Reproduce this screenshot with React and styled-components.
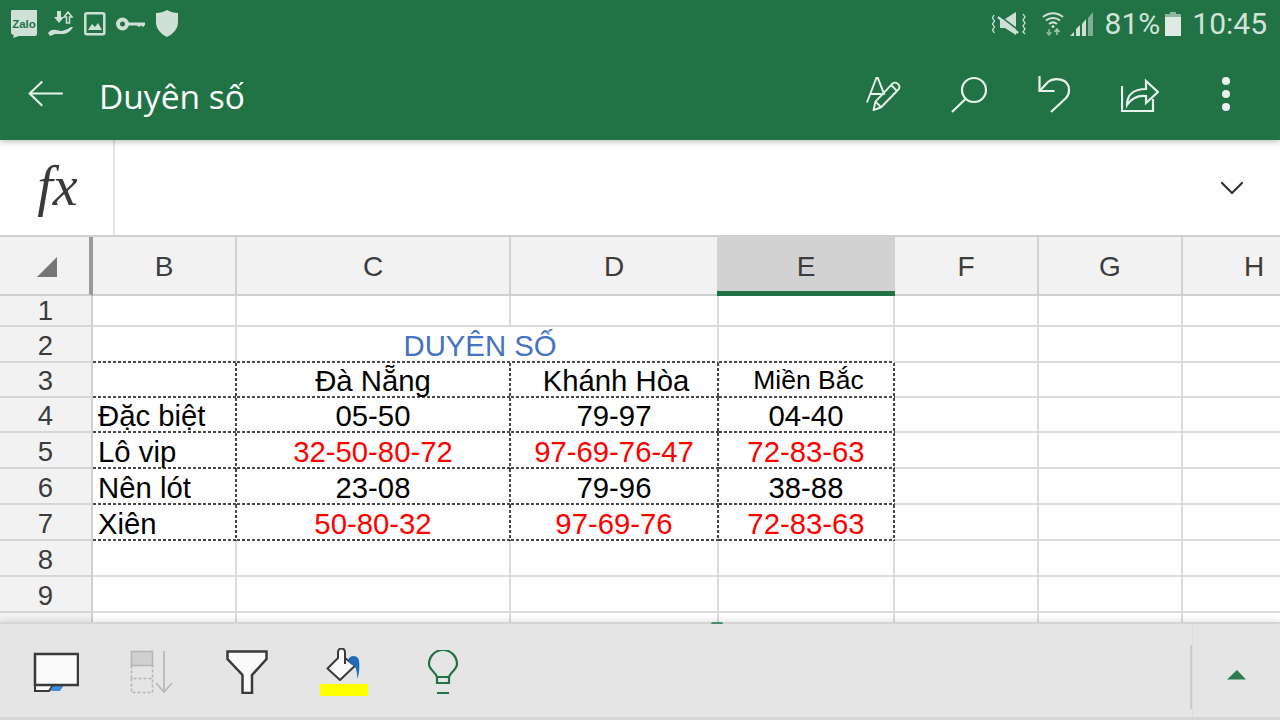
import styled, { createGlobalStyle } from 'styled-components';
import { ChevronDown } from 'lucide-react';

const GlobalStyle = createGlobalStyle`
  html, body { margin: 0; padding: 0; background: #fff; }
  body { font-family: "Liberation Sans", Arial, sans-serif; }
`;

const Screen = styled.div`
  width: 1280px;
  height: 720px;
  display: flex;
  flex-direction: column;
  overflow: hidden;
`;

const Header = styled.header`
  height: 140px;
  flex: none;
  background: #217346;
  color: #fff;
  position: relative;
  z-index: 2;
  box-shadow: 0 2px 6px rgba(0, 0, 0, 0.25);
`;

const StatusBar = styled.div`
  height: 50px;
  display: flex;
  align-items: center;
  justify-content: space-between;
  padding: 0 13px 3px 10px;
  box-sizing: border-box;
`;

const StatusGroup = styled.div`
  display: flex;
  align-items: center;
  gap: ${(p) => p.$gap || 6}px;
`;

const StatusText = styled.span`
  font-family: Roboto, sans-serif;
  font-size: ${(p) => p.$size || 30}px;
  color: #d3e3da;
  line-height: 1;
  margin-left: ${(p) => p.$left || 0}px;
`;

const AppBar = styled.div`
  height: 90px;
  display: flex;
  align-items: center;
  padding: 0 0 0 28px;
  margin-top: -1px;
`;

const Title = styled.h1`
  margin: 0 0 0 35px;
  padding-top: 4px;
  font: 400 33.500px "Open Sans", sans-serif;
  color: #fff;
  flex: 1;
`;

const Actions = styled.div`
  display: flex;
  align-items: center;
  gap: 50px;
  padding-right: 49px;
`;

const FormulaBar = styled.div`
  height: 95px;
  flex: none;
  display: flex;
  background: #fff;
`;

const FxBox = styled.div`
  width: 115px;
  box-sizing: border-box;
  border-right: 2px solid #e4e4e4;
  display: flex;
  align-items: center;
  justify-content: center;
  font: italic 56px "Liberation Serif", serif;
  color: #3a3a3a;
  padding: 0 0 4px 2px;
`;

const FormulaInput = styled.div`
  flex: 1;
  display: flex;
  align-items: center;
  justify-content: flex-end;
  padding-right: 28px;
  color: #333;
`;

const Sheet = styled.div`
  flex: 1;
  min-height: 0;
  overflow: hidden;
  border-top: 2px solid #d0d0d0;
  display: grid;
  grid-template-columns: 93px 144px 274px 208px 176px 144px 144px 144px;
  grid-auto-rows: max-content;
`;

const HeadCell = styled.div`
  height: 59px;
  box-sizing: border-box;
  padding-top: ${(p) => (p.$selected ? 5 : 2)}px;
  background: ${(p) => (p.$selected ? '#d2d2d2' : '#f2f2f2')};
  border-bottom: ${(p) => (p.$selected ? '5px solid #217346' : '2px solid #d0d0d0')};
  margin-left: ${(p) => (p.$selected ? '-2px' : '0')};
  border-right: ${(p) => (p.$selected ? '0' : '2px solid #d0d0d0')};
  display: flex;
  align-items: center;
  justify-content: center;
  font-size: 28px;
  color: #3c3c3c;
  position: relative;
  z-index: ${(p) => (p.$selected ? 1 : 0)};
`;

const Corner = styled(HeadCell)`
  border-right: 4px solid #999;
  padding-left: 5px;
`;

const RowHead = styled.div`
  height: ${(p) => p.$h + 2}px;
  box-sizing: border-box;
  padding-top: ${(p) => (p.$h < 30 ? 1 : 3)}px;
  background: #f2f2f2;
  border-bottom: 2px solid #d6d6d6;
  border-right: 2px solid #d0d0d0;
  display: flex;
  align-items: center;
  justify-content: center;
  font-size: 27.500px;
  color: #3c3c3c;
`;

const dashRow = 'repeating-linear-gradient(90deg, #4a4a4a 0 3px, transparent 3px 5px)';
const dashColumn = 'repeating-linear-gradient(180deg, #4a4a4a 0 3px, transparent 3px 5px)';

const Cell = styled.div`
  height: ${(p) => p.$h + 2}px;
  box-sizing: border-box;
  grid-column: span ${(p) => p.$span || 1};
  border-right: 2px solid ${(p) => (p.$boxed ? 'transparent' : '#dcdcdc')};
  border-bottom: 2px solid ${(p) => (p.$boxed || p.$under ? 'transparent' : '#dcdcdc')};
  background-origin: border-box;
  background-repeat: no-repeat;
  background-image: ${(p) => (p.$boxed ? `${dashRow}, ${dashColumn}` : p.$under ? dashRow : 'none')};
  background-position: ${(p) => (p.$boxed ? 'left bottom, right top' : 'left bottom')};
  background-size: ${(p) => (p.$boxed ? '100% 2px, 2px 100%' : '100% 2px')};
  display: flex;
  align-items: center;
  justify-content: ${(p) => (p.$left ? 'flex-start' : 'center')};
  padding-top: ${(p) => (p.$h < 34 ? 2 : 4)}px;
  padding-left: ${(p) => (p.$left ? 5 : p.$shift || 0)}px;
  font-size: ${(p) => p.$size || 29.300}px;
  color: ${(p) => p.$color || '#000'};
  white-space: nowrap;
`;

const Toolbar = styled.footer`
  height: 98px;
  flex: none;
  box-sizing: border-box;
  background: #e5e5e5;
  border-top: 2px solid #d4d4d4;
  border-bottom: 3px solid #d6d6d6;
  display: flex;
  align-items: center;
  position: relative;
  z-index: 2;
  box-shadow: 0 -3px 5px rgba(0, 0, 0, 0.08);
  &::before {
    content: '';
    position: absolute;
    left: 711px;
    top: -2px;
    width: 12px;
    height: 2px;
    border-radius: 2px 2px 0 0;
    background: #4a8a68;
  }
`;

const Tools = styled.div`
  flex: 1;
  display: flex;
  align-items: center;
  gap: 51px;
  padding: 3px 0 0 33px;
`;

const ExpandArea = styled.div`
  width: 88px;
  align-self: stretch;
  box-sizing: border-box;
  padding-top: 9px;
  border-left: 1px solid #dcdcdc;
  display: flex;
  align-items: center;
  justify-content: center;
  position: relative;
  &::before {
    content: '';
    position: absolute;
    left: -3px;
    top: 21px;
    height: 64px;
    width: 2px;
    background: #cbcbcb;
  }
`;

const ZaloIcon = () => (
  <svg width="28" height="28" viewBox="0 0 28 28">
    <path d="M1 3a3 3 0 0 1 3-3h23v25a2 2 0 0 1-2 2H9l-6 2 1-3a3 3 0 0 1-3-3z" fill="#cfe0d6" transform="translate(0 -1)" />
    <text x="14" y="17.500" fontFamily="Liberation Sans" fontWeight="700" fontSize="11.500" textAnchor="middle" fill="#217346">Zalo</text>
  </svg>
);

const TransferIcon = () => (
  <svg width="26" height="26" viewBox="0 0 26 26" fill="#cfe0d6">
    <path d="M9 0h4v6h3l-5 6-5-6h3z" />
    <path d="M20 1l4 5h-2.500v6h-3V6H16z" fill="none" stroke="#cfe0d6" strokeWidth="1.500" />
    <path d="M0 22c2-3 5-4 8-3l5 1c2 0 7-2 10-4l2 0c-2 4-6 7-10 7H7l-5 2z" />
  </svg>
);

const PhotoIcon = () => (
  <svg width="22" height="24" viewBox="0 0 22 24">
    <rect x="1.300" y="1.300" width="19" height="21" rx="1.500" fill="none" stroke="#cfe0d6" strokeWidth="2.500" />
    <path d="M4 18l4-6 3 3 3-4 4 7z" fill="#cfe0d6" />
  </svg>
);

const KeyIcon = () => (
  <svg width="29" height="14" viewBox="0 0 29 14">
    <circle cx="6.500" cy="7" r="4.500" fill="none" stroke="#cfe0d6" strokeWidth="4" />
    <path d="M12 5.500h17V8l-2 2-2-1.500-2 1.500-2-1.500H12z" fill="#cfe0d6" />
  </svg>
);

const ShieldIcon = () => (
  <svg width="24" height="27" viewBox="0 0 24 27">
    <path d="M12 0c3 2 7 3 11 3v9c0 7-5 12-11 15C6 24 1 19 1 12V3c4 0 8-1 11-3z" fill="#cfe0d6" />
  </svg>
);

const MuteIcon = () => (
  <svg width="45" height="24" viewBox="0 0 45 24" fill="none">
    <path d="M2 3l-1.500 3 2 3-2 3 2 3-2 3 2 3" stroke="#cfe0d6" strokeWidth="1.300" />
    <path d="M31 2l2 3-2 3 2 3-2 3 2 3-2 3 2 2" stroke="#cfe0d6" strokeWidth="1.300" />
    <path d="M8 7h5l11-7v23l-11-7H8z" fill="#cfe0d6" />
    <path d="M6 5l20 16" stroke="#cfe0d6" strokeWidth="2.500" />
    <path d="M6 2.500l21 16" stroke="#217346" strokeWidth="1.500" />
  </svg>
);

const WifiIcon = () => (
  <svg width="23" height="25" viewBox="0 0 23 25" fill="none">
    <path d="M1 6c6-5 14-5 20 0" stroke="#cfe0d6" strokeWidth="2" />
    <path d="M4 9.500c4-3.500 10-3.500 14 0" stroke="#cfe0d6" strokeWidth="2" />
    <path d="M7 13c2.500-2 5.500-2 8 0" stroke="#cfe0d6" strokeWidth="2" />
    <circle cx="11" cy="15.500" r="1.500" fill="#cfe0d6" />
    <path d="M7 18v6M4.500 21L7 24l2.500-3" stroke="#8db5a0" strokeWidth="1.500" />
    <path d="M15 24v-6M12.500 21L15 18l2.500 3" stroke="#a9c8b7" strokeWidth="1.500" />
  </svg>
);

const SignalIcon = () => (
  <svg width="25" height="24" viewBox="0 0 25 24">
    <path d="M0 24l4-4v4z" fill="#cfe0d6" />
    <path d="M6 24v-7l4-4v11z" fill="#cfe0d6" />
    <path d="M12 24V12l4-5v17z" fill="#cfe0d6" />
    <path d="M18 24V6l5-6v24z" fill="#7fae95" />
  </svg>
);

const BatteryIcon = () => (
  <svg width="16" height="24" viewBox="0 0 16 24">
    <path d="M5 0h6v2h5v22H0V2h5z" fill="#dfeae4" />
    <path d="M5 0h6v2h5v3H0V2h5z" fill="#8db5a0" />
  </svg>
);

const BackIcon = () => (
  <svg width="36" height="28" viewBox="0 0 38 30" fill="none" stroke="#e9f1ec" strokeWidth="2.200">
    <path d="M37 14.500H2M15 1.500L1.500 14.500 15 27.500" />
  </svg>
);

const FontPenIcon = () => (
  <svg width="35" height="36" viewBox="0 0 37 38" fill="none" stroke="#e9f1ec" strokeWidth="2">
    <path d="M1 28L11 2h1.500l7 18M4.500 19h12" />
    <path d="M8 36l2-9L28 8c1.500-1.500 4-1.500 6 .5s1.500 4 .5 5.500L16 33z" strokeLinejoin="round" />
    <path d="M10 27l6 6M27 10l6 6" />
  </svg>
);

const SearchIcon = () => (
  <svg width="37" height="37" viewBox="0 0 37 37" fill="none" stroke="#e9f1ec" strokeWidth="2.200">
    <circle cx="23" cy="14" r="12" />
    <path d="M14.500 23L1 36" />
  </svg>
);

const UndoIcon = () => (
  <svg width="33" height="37" viewBox="0 0 33 37" fill="none" stroke="#e9f1ec" strokeWidth="2.200">
    <path d="M1.500 0v15h15" />
    <path d="M1.500 15L10 6c6-5 21-4 21 8 0 4-1 6-3 8L13 36" />
  </svg>
);

const ShareIcon = () => (
  <svg width="38" height="36" viewBox="0 0 38 36" fill="none" stroke="#e9f1ec" strokeWidth="2.200">
    <path d="M1 10v25h31V23" />
    <path d="M6 29c0-11 8-16 19-16V5l12 11-12 11v-7C16 19 10 23 6 29z" strokeLinejoin="miter" />
  </svg>
);

const MoreIcon = () => (
  <svg width="22" height="36" viewBox="-12 0 22 36" fill="#e9f1ec">
    <circle cx="5" cy="5" r="4" />
    <circle cx="5" cy="18" r="4" />
    <circle cx="5" cy="31" r="4" />
  </svg>
);

const CornerMark = () => (
  <svg width="20" height="20" viewBox="0 0 20 20">
    <path d="M20 0v20H0z" fill="#757575" />
  </svg>
);

const CommentIcon = () => (
  <svg width="46" height="40" viewBox="0 0 46 40">
    <path d="M2 33v6h14l4-6z" fill="#fafafa" stroke="#3a3a3a" strokeWidth="2" />
    <path d="M17 39l4-6h10l-4 6z" fill="#3f8fd6" />
    <path d="M2 2h43v31H2z" fill="#fafafa" stroke="#3a3a3a" strokeWidth="2.500" />
  </svg>
);

const SortIcon = () => (
  <svg width="44" height="44" viewBox="0 0 44 44" fill="none" stroke="#b5b5b5" strokeWidth="1.600">
    <rect x="1.500" y="1.500" width="21" height="14" fill="#d0d0d0" />
    <path d="M1.500 15.500v13h21v-13M1.500 28.500v14h21v-14" strokeDasharray="3 2" />
    <path d="M34 1v41M26 33l8 9 8-9" />
  </svg>
);

const FilterIcon = () => (
  <svg width="44" height="44" viewBox="0 0 42 44">
    <path d="M1.500 1.500h39V9L26 25v18h-9.500V25L1.500 9z" fill="#fafafa" stroke="#3a3a3a" strokeWidth="2.500" />
  </svg>
);

const FillIcon = () => (
  <svg width="56" height="48" viewBox="0 0 56 48">
    <path d="M7.500 20.500L18 10V4a3.500 3.500 0 0 1 7 0v6l10 7.700L20 32z" fill="#fafafa" stroke="#3a3a3a" strokeWidth="2" strokeLinejoin="round" />
    <path d="M25 6v10" stroke="#3a3a3a" strokeWidth="2" />
    <path d="M28.500 11c2-4 8-4 10 0 1.500 5 1 13-1 20-.5-6-1-12-4-14-2 0-5-2-5-6z" fill="#1b6dbb" />
    <rect x="0" y="36" width="48" height="12" fill="#ffff00" />
  </svg>
);

const BulbIcon = () => (
  <svg width="32" height="45" viewBox="0 0 32 45" fill="none" stroke="#217346" strokeWidth="2.200">
    <path d="M10 33v-6C9 22 2 20 2 14A14 14 0 0 1 30 14c0 6-7 8-8 13v6z" />
    <path d="M10 27h12M10 43h12" />
  </svg>
);

const ExpandArrow = () => (
  <svg width="20" height="10" viewBox="0 0 20 10">
    <path d="M10 0l9 9.500H0z" fill="#2d7d50" />
  </svg>
);

const columns = ['B', 'C', 'D', 'E', 'F', 'G', 'H'];

const rows = [
  { id: 1, h: 29 },
  { id: 2, h: 34 },
  { id: 3, h: 33 },
  { id: 4, h: 33, label: 'Đặc biệt', values: ['05-50', '79-97', '04-40'] },
  { id: 5, h: 34, label: 'Lô vip', values: ['32-50-80-72', '97-69-76-47', '72-83-63'], color: '#ff0000' },
  { id: 6, h: 34, label: 'Nên lót', values: ['23-08', '79-96', '38-88'] },
  { id: 7, h: 34, label: 'Xiên', values: ['50-80-32', '97-69-76', '72-83-63'], color: '#ff0000' },
  { id: 8, h: 34 },
  { id: 9, h: 34 },
  { id: 10, h: 34 },
];

function Blank({ h, count }) {
  return Array.from({ length: count }, (_, i) => <Cell key={i} $h={h} />);
}

function SheetRow({ row }) {
  const { id, h, label, values, color } = row;

  if (id === 2) {
    return (
      <>
        <RowHead $h={h}>{id}</RowHead>
        <Cell $h={h} $under />
        <Cell $h={h} $span={2} $under $color="#4472c4" $shift={6}>DUYÊN SỐ</Cell>
        <Cell $h={h} $under />
        <Blank h={h} count={3} />
      </>
    );
  }

  if (id === 3) {
    return (
      <>
        <RowHead $h={h}>{id}</RowHead>
        <Cell $h={h} $boxed />
        <Cell $h={h} $boxed>Đà Nẵng</Cell>
        <Cell $h={h} $boxed $shift={4}>Khánh Hòa</Cell>
        <Cell $h={h} $boxed $size={26.500} $shift={5}>Miền Bắc</Cell>
        <Blank h={h} count={3} />
      </>
    );
  }

  if (!label) {
    return (
      <>
        <RowHead $h={h}>{id}</RowHead>
        <Blank h={h} count={7} />
      </>
    );
  }

  return (
    <>
      <RowHead $h={h}>{id}</RowHead>
      <Cell $h={h} $boxed $left>{label}</Cell>
      {values.map((value) => (
        <Cell key={value + id} $h={h} $boxed $color={color}>{value}</Cell>
      ))}
      <Blank h={h} count={3} />
    </>
  );
}

export default function App() {
  return (
    <Screen>
      <GlobalStyle />
      <Header>
        <StatusBar>
          <StatusGroup $gap={10}>
            <ZaloIcon />
            <TransferIcon />
            <PhotoIcon />
            <KeyIcon />
            <ShieldIcon />
          </StatusGroup>
          <StatusGroup $gap={5}>
            <MuteIcon />
            <WifiIcon />
            <SignalIcon />
            <StatusText $left={5}>81%</StatusText>
            <BatteryIcon />
            <StatusText $left={6}>10:45</StatusText>
          </StatusGroup>
        </StatusBar>
        <AppBar>
          <BackIcon />
          <Title>Duyên số</Title>
          <Actions>
            <FontPenIcon />
            <SearchIcon />
            <UndoIcon />
            <ShareIcon />
            <MoreIcon />
          </Actions>
        </AppBar>
      </Header>

      <FormulaBar>
        <FxBox>fx</FxBox>
        <FormulaInput>
          <ChevronDown size={40} strokeWidth={1.300} />
        </FormulaInput>
      </FormulaBar>

      <Sheet>
        <Corner><CornerMark /></Corner>
        {columns.map((name) => (
          <HeadCell key={name} $selected={name === 'E'}>{name}</HeadCell>
        ))}
        {rows.map((row) => <SheetRow key={row.id} row={row} />)}
      </Sheet>

      <Toolbar>
        <Tools>
          <CommentIcon />
          <SortIcon />
          <FilterIcon />
          <FillIcon />
          <BulbIcon />
        </Tools>
        <ExpandArea>
          <ExpandArrow />
        </ExpandArea>
      </Toolbar>
    </Screen>
  );
}
